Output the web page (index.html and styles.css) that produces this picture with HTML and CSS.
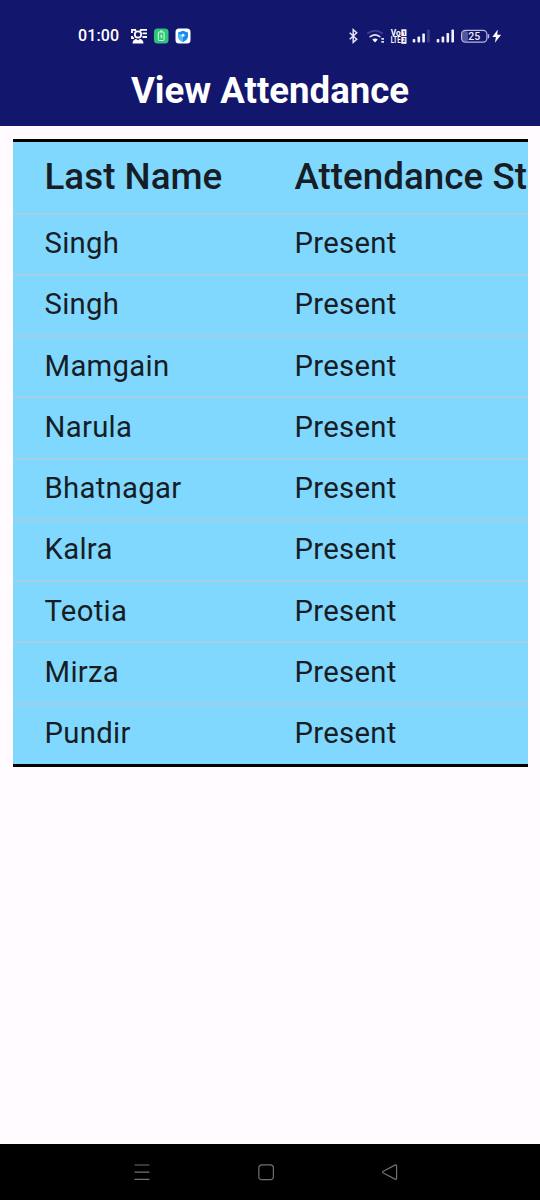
FILE: index.html
```html
<!DOCTYPE html>
<html lang="en">
<head>
<meta charset="utf-8">
<title>View Attendance</title>
<link rel="stylesheet" href="styles.css">
</head>
<body>
<div class="screen">
  <header class="app-bar">
    <div class="status">
      <span class="clock">01:00</span>
      <svg class="notices" width="60" height="16" viewBox="131 28 60 16">
        <g fill="none" stroke="#fff" stroke-width="1.8">
          <path d="M132 33v-3.200h4M140.500 29.800h6.500M142.500 33.400h4.500M142.500 37h4.500M132 36v2.200h2"/>
          <circle cx="138" cy="34.500" r="3.200"/>
          <path d="M136 31l-1.500-1.500M140 31l1.500-1.500"/>
        </g>
        <path fill="#fff" d="M132.500 43.500c0-3 2-4.500 3.700-4.500l1.800 1.200 1.800-1.200c1.900 0 3.700 1.500 3.700 4.500z"/>
        <rect x="154" y="28.500" width="14.500" height="15" rx="3.500" fill="#2fc476"/>
        <rect x="158.300" y="32" width="5.800" height="8.500" rx="1" fill="none" stroke="#d9ffe8" stroke-width="1"/>
        <path d="M160 31h2.500" stroke="#d9ffe8"/>
        <path d="M161.800 33.500l-2 3h1.400l-.4 2.700 2-3.200h-1.300z" fill="#d9ffe8"/>
        <rect x="175.500" y="28.500" width="15" height="15" rx="3.500" fill="#fff"/>
        <path d="M183 30.800l5 1.700v3.500c0 3-2.300 4.800-5 6-2.700-1.200-5-3-5-6v-3.500z" fill="#168bf2"/>
        <path d="M178 33l5 3v6c-2.700-1.200-5-3-5-6z" fill="#45bfff"/>
        <circle cx="183" cy="35.300" r="1.500" fill="#fff"/>
      </svg>
      <svg class="signals" width="154" height="20" viewBox="348 26 154 20">
        <path d="M349.700 32.800l7 6.400-3.500 3.200V29.600l3.500 3.200-7 6.400" fill="none" stroke="#e4e4f5" stroke-width="1.500"/>
        <g fill="none" stroke-linecap="round" stroke-width="1.700">
          <path d="M367.800 33.300q7.200-5.500 14.400 0" stroke="#41418c"/>
          <path d="M370.200 36.700q4.800-3.700 9.600 0" stroke="#dedef2"/>
        </g>
        <path d="M372.300 39.500q2.700-2 5.400 0l-2.700 3z" fill="#fff"/>
        <path d="M381.300 38h2.700v1.700h-2.700zM381.300 41h2.700v1.700h-2.700z" fill="#dedef2"/>
        <g class="volte">
          <text x="390.700" y="35.700" textLength="10" lengthAdjust="spacingAndGlyphs">Vo</text>
          <text x="390.700" y="43.400" textLength="10" lengthAdjust="spacingAndGlyphs">LTE</text>
        </g>
        <rect x="401.300" y="29.300" width="5.200" height="6.800" fill="#fff"/>
        <rect x="401.300" y="37" width="5.200" height="6.800" fill="#fff"/>
        <g class="sim"><text x="402.400" y="34.700">1</text><text x="402.400" y="42.400">2</text></g>
        <g fill="#f2f2fb">
          <rect x="412.700" y="39" width="2.600" height="3.500" rx=".8"/>
          <rect x="417.500" y="36.500" width="2.600" height="6" rx=".8"/>
          <rect x="422.300" y="33.500" width="2.600" height="9" rx=".8"/>
          <rect x="427.100" y="29.500" width="2.600" height="13" rx=".8" fill="#3f3f87"/>
          <rect x="436.700" y="39" width="2.600" height="3.500" rx=".8"/>
          <rect x="441.600" y="36.500" width="2.600" height="6" rx=".8"/>
          <rect x="446.500" y="33" width="2.600" height="9.500" rx=".8"/>
          <rect x="451.400" y="29.500" width="2.600" height="13" rx=".8"/>
        </g>
        <rect x="462" y="31" width="6" height="10.500" rx="2.500" fill="#55559a"/>
        <rect x="461.600" y="30.300" width="25.300" height="11.800" rx="3.800" fill="none" stroke="#b9b9dc" stroke-width="1.200"/>
        <path d="M488.500 34.200v4" stroke="#b9b9dc" stroke-width="1.400"/>
        <text class="level" x="474.300" y="40.100" text-anchor="middle">25</text>
        <path d="M497.800 29.500l-5.500 7.500h3.600l-1 5.800 6.200-8h-3.900z" fill="#fff"/>
      </svg>
    </div>
    <h1 class="title">View Attendance</h1>
  </header>
  <main class="content">
    <div class="table">
      <div class="row head"><span>Last Name</span><span>Attendance Status</span></div>
      <div class="row"><span>Singh</span><span>Present</span></div>
      <div class="row"><span>Singh</span><span>Present</span></div>
      <div class="row"><span>Mamgain</span><span>Present</span></div>
      <div class="row"><span>Narula</span><span>Present</span></div>
      <div class="row"><span>Bhatnagar</span><span>Present</span></div>
      <div class="row"><span>Kalra</span><span>Present</span></div>
      <div class="row"><span>Teotia</span><span>Present</span></div>
      <div class="row"><span>Mirza</span><span>Present</span></div>
      <div class="row"><span>Pundir</span><span>Present</span></div>
    </div>
  </main>
  <nav class="nav-bar">
    <svg width="18" height="18" viewBox="0 0 18 18"><path d="M1.500 2h15M1.500 9.200h15M1.500 16.400h15"/></svg>
    <svg width="18" height="18" viewBox="0 0 18 18"><rect x="1.800" y="1.800" width="14.600" height="14.800" rx="3.200"/></svg>
    <svg width="18" height="18" viewBox="0 0 18 18"><path d="M2.300 8.300L14 2.100q1.600-.7 1.600 1v12q0 1.700-1.600 1L2.300 10q-1.500-.9 0-1.700z"/></svg>
  </nav>
</div>
</body>
</html>
```
FILE: styles.css
```css
body {
  margin: 0;
  font-family: Roboto, sans-serif;
}

.screen {
  display: flex;
  flex-direction: column;
  width: 540px;
  height: 1200px;
  overflow: hidden;
  background: #fffbff;
}

.app-bar {
  box-sizing: border-box;
  height: 126px;
  padding-top: 26px;
  background: #13166d;
  color: #fff;
}

.status {
  display: flex;
  align-items: center;
  height: 20px;
  padding: 0 38px 0 78px;
}

.clock {
  width: 53px;
  font-size: 16px;
  line-height: 20px;
  font-weight: 500;
  letter-spacing: 0.1px;
}

.signals {
  margin-left: auto;
}

.volte {
  fill: #fff;
  font-size: 8.5px;
  font-weight: 700;
}

.sim {
  fill: #13166d;
  font-size: 5.5px;
  font-weight: 700;
}

.level {
  fill: #e8e8f7;
  font-size: 10.5px;
  font-weight: 500;
}

.title {
  margin: 23px 0 0;
  font-size: 36.6px;
  line-height: 43px;
  font-weight: 700;
  text-align: center;
}

.content {
  flex: 1;
  padding: 13px;
}

.table {
  width: 514.5px;
  box-sizing: border-box;
  overflow: hidden;
  background: #81d8ff;
  border-top: 3px solid #000;
  border-bottom: 3px solid #000;
  color: #171d25;
}

.row {
  display: grid;
  grid-template-columns: 250px auto;
  align-items: center;
  box-sizing: border-box;
  height: 61.25px;
  padding: 0 0 2px 31.5px;
  border-top: 2px solid #a6cfe6;
  font-size: 29.3px;
  letter-spacing: 0.3px;
  white-space: nowrap;
}

.head {
  height: 70.5px;
  border-top: 0;
  font-size: 36.8px;
  font-weight: 500;
  letter-spacing: 0;
}

.nav-bar {
  display: flex;
  align-items: center;
  box-sizing: border-box;
  height: 56px;
  padding: 0 142px 0 133px;
  gap: 106px;
  background: #000;
}

.nav-bar svg {
  flex: none;
  fill: none;
  stroke: #707070;
  stroke-width: 1.2;
}
```
